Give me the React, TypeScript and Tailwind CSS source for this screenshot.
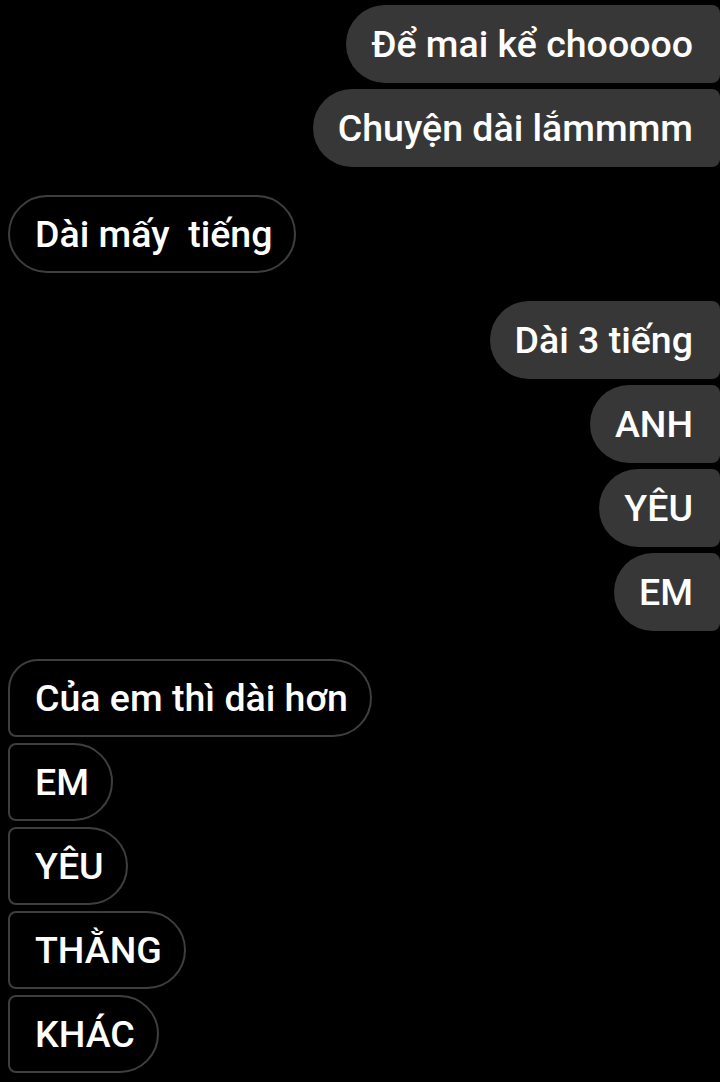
type Msg = { text: string; mine: boolean; pos: 'first' | 'mid' | 'last' | 'single' }

const GROUPS: Msg[][] = [
  [
    { text: 'Để mai kể chooooo', mine: true, pos: 'first' },
    { text: 'Chuyện dài lắmmmm', mine: true, pos: 'last' },
  ],
  [{ text: 'Dài mấy  tiếng', mine: false, pos: 'single' }],
  [
    { text: 'Dài 3 tiếng', mine: true, pos: 'first' },
    { text: 'ANH', mine: true, pos: 'mid' },
    { text: 'YÊU', mine: true, pos: 'mid' },
    { text: 'EM', mine: true, pos: 'last' },
  ],
  [
    { text: 'Của em thì dài hơn', mine: false, pos: 'first' },
    { text: 'EM', mine: false, pos: 'mid' },
    { text: 'YÊU', mine: false, pos: 'mid' },
    { text: 'THẰNG', mine: false, pos: 'mid' },
    { text: 'KHÁC', mine: false, pos: 'last' },
  ],
]

function radius(m: Msg) {
  if (m.mine) {
    return 'rounded-l-[39px] rounded-r-[8px]'
  }
  if (m.pos === 'single') return 'rounded-[39px]'
  if (m.pos === 'first') return 'rounded-r-[39px] rounded-tl-[30px] rounded-bl-[8px]'
  return 'rounded-r-[39px] rounded-l-[8px]'
}

function Bubble({ m }: { m: Msg }) {
  return (
    <div className={`flex ${m.mine ? 'justify-end' : 'justify-start pl-[8px]'}`}>
      <div
        className={`h-[78px] flex items-center whitespace-pre pl-[25px] text-[37.5px] font-medium text-white
          ${radius(m)} ${m.mine ? 'pr-[27px] bg-[#373737]' : 'pr-[22px] bg-black border-2 border-[#3e3e3e]'}`}
      >
        {m.text}
      </div>
    </div>
  )
}

export default function App() {
  return (
    <div
      className="w-[720px] h-[1082px] bg-black overflow-hidden pt-[5px] flex flex-col gap-[28px]"
      style={{ fontFamily: 'Roboto, "Noto Sans", sans-serif' }}
    >
      {GROUPS.map((g, i) => (
        <div key={i} className="flex flex-col gap-[6px]">
          {g.map((m, j) => (
            <Bubble key={j} m={m} />
          ))}
        </div>
      ))}
    </div>
  )
}
